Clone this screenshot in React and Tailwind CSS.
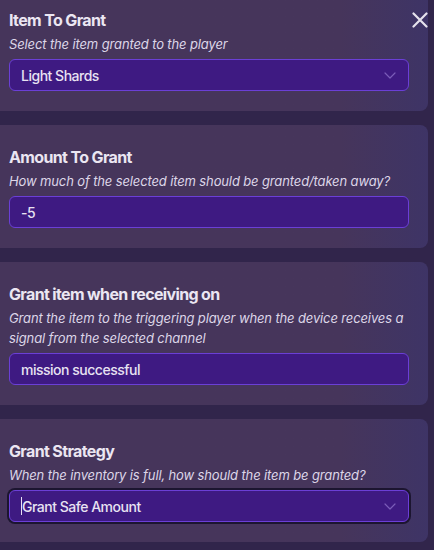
const fields = [
  {
    title: 'Item To Grant',
    hint: 'Select the item granted to the player',
    value: 'Light Shards',
    select: true,
  },
  {
    title: 'Amount To Grant',
    hint: 'How much of the selected item should be granted/taken away?',
    value: '-5',
  },
  {
    title: 'Grant item when receiving on',
    hint: 'Grant the item to the triggering player when the device receives a signal from the selected channel',
    value: 'mission successful',
  },
  {
    title: 'Grant Strategy',
    hint: 'When the inventory is full, how should the item be granted?',
    value: 'Grant Safe Amount',
    select: true,
    focused: true,
  },
];

const Chevron = () => (
  <svg width="12" height="7" viewBox="0 0 12 7" fill="none" className="shrink-0">
    <path d="M1 1l5 5 5-5" stroke="#7a5cb8" strokeWidth="1.2" strokeLinecap="round" strokeLinejoin="round" />
  </svg>
);

const Field = ({ title, hint, value, select, focused }) => (
  <div className="ml-[-10px] mr-[6px] rounded-lg bg-gradient-to-r from-[#46355b] from-80% to-[#3e3466] px-[19px] pt-[20px] pb-[20px]">
    <h3 className="text-[16px] leading-[24px] font-bold tracking-[-0.04em] text-[#ebe6f2]">{title}</h3>
    <p className="mt-[2px] text-[13px] leading-[20px] italic tracking-[-0.01em] text-[#ddd6e8]">{hint}</p>
    <div
      className={
        focused
          ? 'mt-[5px] h-[32px] rounded-md border border-[#6b3fd6] bg-[#3e1a82] ring-2 ring-[#1c1530] flex items-center pl-[11px] pr-[12px]'
          : 'mt-[5px] h-[32px] rounded-md border border-[#6b3fd6] bg-[#3e1a82] flex items-center pl-[11px] pr-[12px]'
      }
    >
      {focused && <span className="w-px h-[18px] bg-[#e8e2f2]" />}
      <span className="flex-1 text-[14px] font-medium tracking-[-0.035em] text-[#e8e2f2]">{value}</span>
      {select && <Chevron />}
    </div>
  </div>
);

export default function App() {
  return (
    <div className="relative w-full h-[550px] overflow-hidden bg-[#31254b]" style={{ fontFamily: 'Inter, "Noto Sans", sans-serif' }}>
      <div className="mt-[-12px] flex flex-col gap-[14px]">
        {fields.map((f) => (
          <Field key={f.title} {...f} />
        ))}
      </div>
      <button className="absolute top-[12px] left-[412px] p-0">
        <svg width="16" height="16" viewBox="0 0 16 16" fill="none">
          <path d="M1.5 1.5l13 13M14.5 1.5l-13 13" stroke="#e6e2ec" strokeWidth="2.2" strokeLinecap="round" />
        </svg>
      </button>
    </div>
  );
}
